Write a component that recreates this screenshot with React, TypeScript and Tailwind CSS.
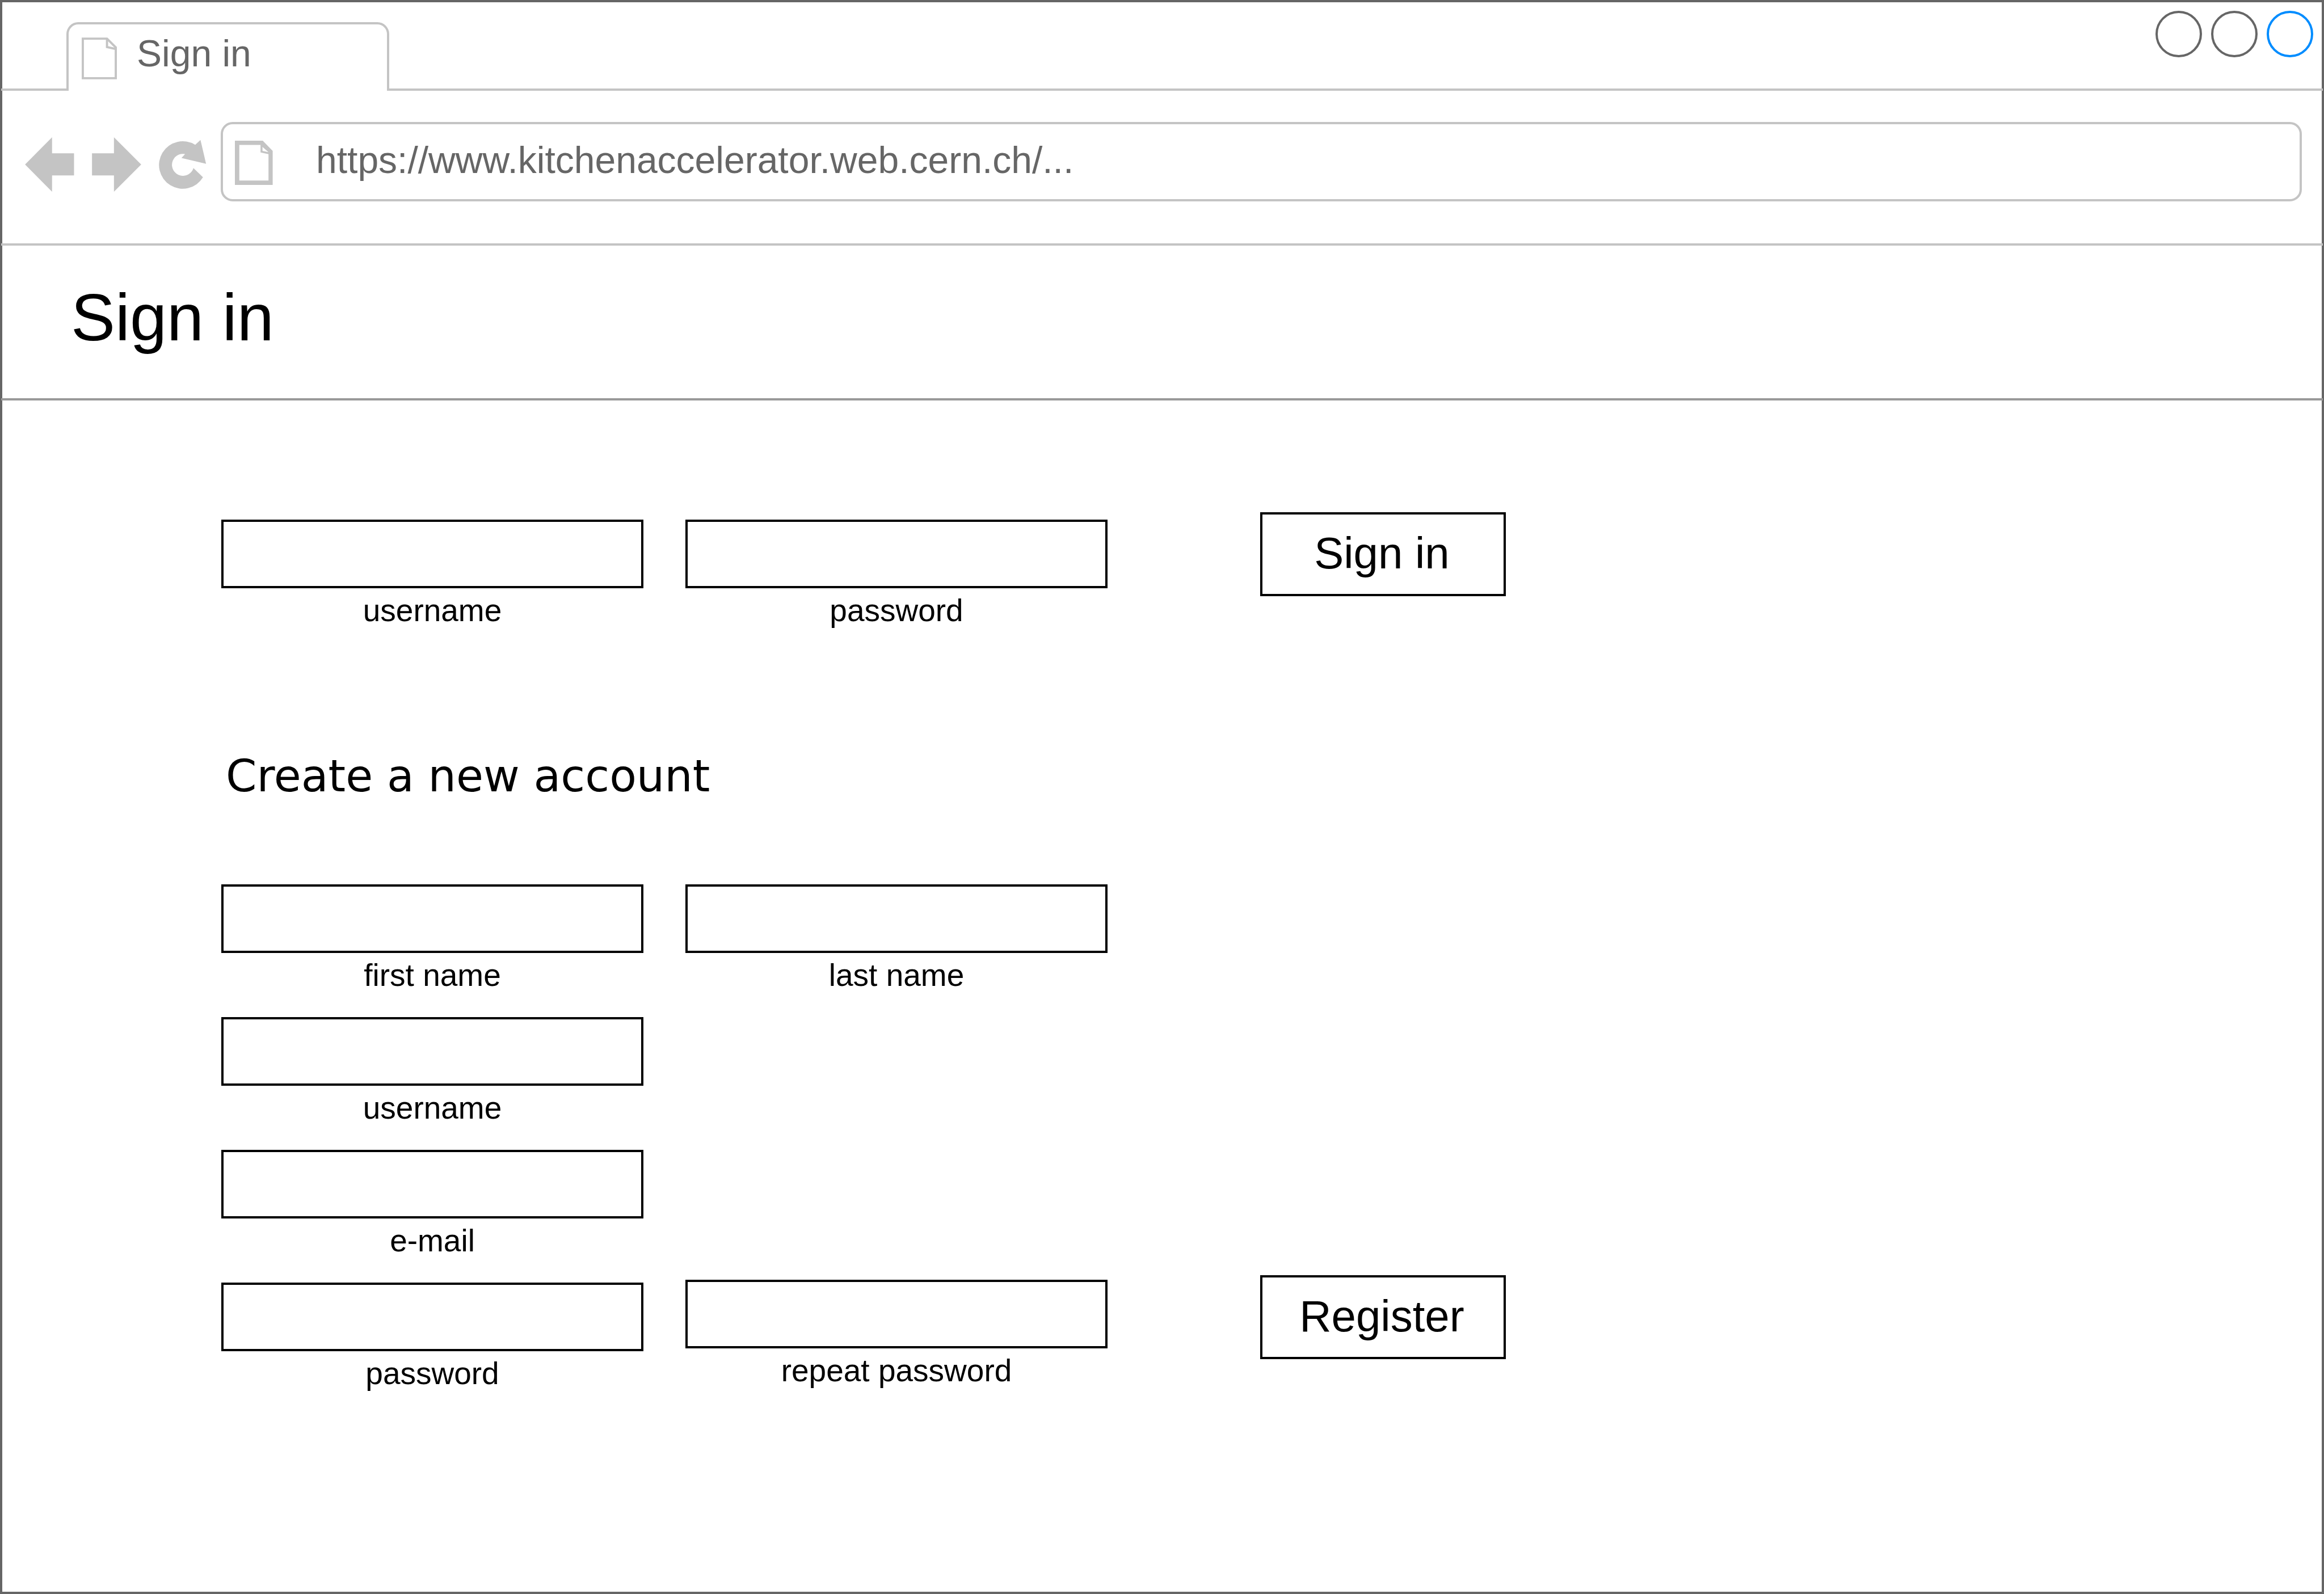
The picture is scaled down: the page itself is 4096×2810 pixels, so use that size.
import React from "react";

type FieldProps = {
  id: string;
  label: string;
  type?: string;
};

function Field({ id, label, type = "text" }: FieldProps) {
  return (
    <div className="flex flex-col">
      <input
        id={id}
        name={id}
        type={type}
        className="h-[121px] w-full border-4 border-black bg-white px-6 text-[55px] outline-none"
      />
      <label htmlFor={id} className="text-center text-[55px] leading-[78px] whitespace-nowrap">
        {label}
      </label>
    </div>
  );
}

function SubmitButton({ children }: { children: React.ReactNode }) {
  return (
    <div className="self-end pb-16 pl-[195px]">
      <button
        type="submit"
        className="flex h-[148px] w-full items-center justify-center border-4 border-black bg-white pr-1 pb-1 text-[78px] leading-none whitespace-nowrap"
      >
        {children}
      </button>
    </div>
  );
}

function TabPageIcon() {
  return (
    <svg
      viewBox="0 0 80 95"
      className="mt-[23px] h-[74px] w-[62px] shrink-0"
      fill="none"
      stroke="#c4c4c4"
      strokeWidth="5"
      aria-hidden="true"
    >
      <path d="M2.5 2.5H57.5L77.5 22.5V92.5H2.5Z" />
      <path d="M57.5 2.5V21.5L77.5 26" />
    </svg>
  );
}

function AddressPageIcon() {
  return (
    <svg viewBox="0 0 86 100" className="mt-[29px] h-[78px] w-[67px] shrink-0" fill="#c4c4c4" aria-hidden="true">
      <path
        fillRule="evenodd"
        d="M0 0H63L85.5 23V100H0ZM10 9.5V90H76V30.5L58 26.5V9.5ZM62.4 14V23L76 26Z"
      />
    </svg>
  );
}

function TabStrip() {
  return (
    <div className="-mx-0.5 flex h-[156px]">
      <div className="w-[115px] shrink-0 border-b-4 border-[#c4c4c4]" />
      <div className="mt-[35px] flex w-[569px] shrink-0 items-start rounded-t-[21px] border-4 border-b-0 border-[#c4c4c4] pl-[23px]">
        <TabPageIcon />
        <span className="mt-[13px] ml-[35px] text-[66px] leading-[76px] whitespace-nowrap text-[#666666]">Sign in</span>
      </div>
      <div className="flex flex-1 items-start justify-end gap-4 border-b-4 border-[#c4c4c4] pt-[15px] pr-[17px]">
        <button type="button" aria-label="Minimize" className="size-[82px] rounded-full border-4 border-[#666666]" />
        <button type="button" aria-label="Maximize" className="size-[82px] rounded-full border-4 border-[#666666]" />
        <button type="button" aria-label="Close" className="size-[82px] rounded-full border-4 border-[#008cff]" />
      </div>
    </div>
  );
}

function Toolbar() {
  return (
    <div className="-mx-0.5 flex items-start border-b-4 border-[#c4c4c4] pt-[55px] pr-[37px] pb-[74px] pl-[42px]">
      <nav className="mt-[27px] mr-[25px] flex shrink-0 gap-[31px]" aria-label="Browser navigation">
        <button type="button" aria-label="Back">
          <svg viewBox="0 0 112 124" className="h-[96px] w-[87px]" fill="#c4c4c4">
            <path d="M0 62L61.5 0V36.5H111.5V87H61.5V124Z" />
          </svg>
        </button>
        <button type="button" aria-label="Forward">
          <svg viewBox="0 0 112 124" className="h-[96px] w-[87px]" fill="#c4c4c4">
            <path d="M112 62L50 0V36.5H0V87H50V124Z" />
          </svg>
        </button>
        <button type="button" aria-label="Reload">
          <svg viewBox="0 0 108 124" className="h-[96px] w-[84px]" fill="#c4c4c4">
            <path d="M82.5 17.2L94.5 6L107.2 60.5L51.2 47L59.5 38.2A25 25 0 1 0 78.5 70L100.2 91.2A54 54 0 1 1 82.5 17.2Z" />
          </svg>
        </button>
      </nav>
      <div className="flex h-[140px] flex-1 items-start rounded-[21px] border-4 border-[#c4c4c4] pl-[21px]">
        <AddressPageIcon />
        <input
          type="text"
          aria-label="Address"
          defaultValue="https://www.kitchenaccelerator.web.cern.ch/..."
          className="ml-[76px] h-full min-w-0 flex-1 bg-transparent pb-[7px] text-[66px] text-[#666666] outline-none"
        />
      </div>
    </div>
  );
}

const formGrid =
  "grid grid-cols-[minmax(0,744px)_minmax(0,744px)_minmax(0,628px)] gap-x-[74px]";

export default function App() {
  return (
    <div className="flex min-h-screen flex-col border-4 border-[#666666] bg-white font-['Liberation_Sans',Arial,sans-serif] text-black">
      <TabStrip />
      <Toolbar />
      <header className="-mx-0.5 border-b-4 border-[#999999] pt-[67px] pb-[82px] pl-[123px]">
        <h1 className="text-[117px] leading-[120px]">Sign in</h1>
      </header>
      <main className="flex-1 pt-[197px] pl-[386px]">
        <form className={`${formGrid} items-end`} onSubmit={(e) => e.preventDefault()}>
          <Field id="login-username" label="username" />
          <Field id="login-password" label="password" type="password" />
          <SubmitButton>Sign in</SubmitButton>
        </form>
        <h2 className="mt-[206px] mb-[144px] pl-2 font-['DejaVu_Sans',Verdana,sans-serif] text-[78px] leading-[94px]">
          Create a new account
        </h2>
        <form className={`${formGrid} items-start`} onSubmit={(e) => e.preventDefault()}>
          <div className="flex flex-col gap-[35px]">
            <Field id="first-name" label="first name" />
            <Field id="username" label="username" />
            <Field id="email" label="e-mail" type="email" />
            <Field id="password" label="password" type="password" />
          </div>
          <div className="flex flex-col gap-[498px]">
            <Field id="last-name" label="last name" />
            <Field id="repeat-password" label="repeat password" type="password" />
          </div>
          <SubmitButton>Register</SubmitButton>
        </form>
      </main>
    </div>
  );
}
